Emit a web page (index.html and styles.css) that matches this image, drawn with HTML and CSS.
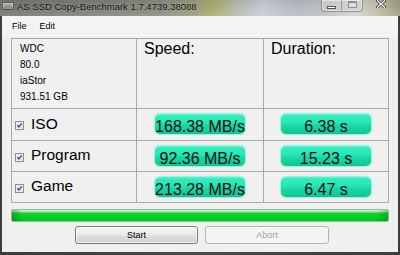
FILE: index.html
```html
<!DOCTYPE html>
<html>
<head>
<meta charset="utf-8">
<link rel="stylesheet" href="styles.css">
</head>
<body>
<div class="window">
  <div class="titlebar">
    <svg class="app-icon" width="12" height="8" viewBox="0 0 12 8">
      <defs>
        <linearGradient id="ig" x1="0" y1="0" x2="0" y2="1">
          <stop offset="0" stop-color="#e0e0e0"/>
          <stop offset="1" stop-color="#8a8a8a"/>
        </linearGradient>
      </defs>
      <rect x="0.5" y="0.5" width="11" height="7" fill="url(#ig)" stroke="#5a5a5a"/>
      <path d="M3 1.5v5M5 1.5v5M7 1.5v5M9 1.5v5" stroke="#6e6e6e" stroke-width="0.8"/>
    </svg>
    <span class="title">AS SSD Copy-Benchmark 1.7.4739.38088</span>
    <div class="caption">
      <div class="cap-group">
        <span class="cap-btn"><i class="glyph-min"></i></span>
        <span class="cap-btn last"><i class="glyph-max"></i></span>
      </div>
      <span class="close">
        <svg width="10" height="8" viewBox="0 0 10 8">
          <path d="M1.5 0.8L8.5 7.2M8.5 0.8L1.5 7.2" stroke="#2a2a2a" stroke-width="2.6" stroke-linecap="square"/>
          <path d="M1.5 0.8L8.5 7.2M8.5 0.8L1.5 7.2" stroke="#ffffff" stroke-width="1.3" stroke-linecap="square"/>
        </svg>
      </span>
    </div>
  </div>
  <div class="middle">
    <div class="client">
      <div class="menubar">
        <span class="menu-item">File</span>
        <span class="menu-item">Edit</span>
      </div>
      <div class="content">
        <div class="grid">
          <div class="cell info">
            <div>WDC</div>
            <div>80.0</div>
            <div>iaStor</div>
            <div>931.51 GB</div>
          </div>
          <div class="cell head">Speed:</div>
          <div class="cell head">Duration:</div>

          <div class="cell label">
            <svg class="check" width="9" height="9" viewBox="0 0 9 9"><rect x="0.5" y="0.5" width="8" height="8" fill="#f4f4f4" stroke="#8e8f8f"/><rect x="1.5" y="1.5" width="6" height="6" fill="#e2e4e8"/><path d="M2.3 4.3L3.8 6L6.8 2.4" fill="none" stroke="#3b4f80" stroke-width="1.3"/></svg>
            <span class="label-text">ISO</span>
          </div>
          <div class="cell val"><div class="pill">168.38 MB/s</div></div>
          <div class="cell val"><div class="pill">6.38 s</div></div>

          <div class="cell label">
            <svg class="check" width="9" height="9" viewBox="0 0 9 9"><rect x="0.5" y="0.5" width="8" height="8" fill="#f4f4f4" stroke="#8e8f8f"/><rect x="1.5" y="1.5" width="6" height="6" fill="#e2e4e8"/><path d="M2.3 4.3L3.8 6L6.8 2.4" fill="none" stroke="#3b4f80" stroke-width="1.3"/></svg>
            <span class="label-text">Program</span>
          </div>
          <div class="cell val"><div class="pill">92.36 MB/s</div></div>
          <div class="cell val"><div class="pill">15.23 s</div></div>

          <div class="cell label">
            <svg class="check" width="9" height="9" viewBox="0 0 9 9"><rect x="0.5" y="0.5" width="8" height="8" fill="#f4f4f4" stroke="#8e8f8f"/><rect x="1.5" y="1.5" width="6" height="6" fill="#e2e4e8"/><path d="M2.3 4.3L3.8 6L6.8 2.4" fill="none" stroke="#3b4f80" stroke-width="1.3"/></svg>
            <span class="label-text">Game</span>
          </div>
          <div class="cell val"><div class="pill">213.28 MB/s</div></div>
          <div class="cell val"><div class="pill">6.47 s</div></div>
        </div>
        <div class="progress"></div>
        <div class="buttons">
          <button class="btn">Start</button>
          <button class="btn disabled">Abort</button>
        </div>
      </div>
    </div>
  </div>
  <div class="bottom-frame"></div>
</div>
</body>
</html>
```

FILE: styles.css
```css
* { box-sizing: border-box; }
html, body { margin: 0; padding: 0; }
body {
  background: #3c3c3c;
  font-family: "Liberation Sans", Arial, sans-serif;
  color: #000;
}
.window {
  width: 400px;
  height: 255px;
  display: flex;
  flex-direction: column;
  overflow: hidden;
}
.titlebar {
  height: 16px;
  flex: none;
  display: flex;
  align-items: flex-start;
  background:
    linear-gradient(180deg, rgba(0,0,0,0.06) 0px, rgba(255,255,255,0) 8px, rgba(255,255,255,0.12) 16px),
    linear-gradient(90deg, #76766e 0px, #7e7e76 90px, #8a8a80 160px, #9a9c78 195px, #aaae72 215px, #b6bab0 238px, #c6cad2 262px, #b4b8c0 300px, #c2c2c4 330px, #d2d2d2 355px, #c0bea8 378px, #9e9c82 400px);
}
.app-icon {
  margin: 2px 0 0 2px;
  flex: none;
}
.title {
  margin-left: 3px;
  font-size: 9.5px;
  line-height: 14px;
  color: #151515;
  text-shadow: 0 0 3px rgba(255,255,255,0.35);
  white-space: nowrap;
}
.caption {
  margin-left: auto;
  display: flex;
  align-items: flex-start;
  margin-right: 2px;
}
.cap-group {
  display: flex;
  height: 12px;
  border: 1px solid rgba(90,90,90,0.55);
  border-top: none;
  border-radius: 0 0 4px 4px;
  box-shadow: inset 0 0 0 1px rgba(255,255,255,0.45);
  background: linear-gradient(180deg, rgba(255,255,255,0.25), rgba(200,205,215,0.35));
}
.cap-btn {
  width: 20px;
  height: 11px;
  display: flex;
  justify-content: center;
  border-right: 1px solid rgba(90,90,90,0.45);
}
.cap-btn.last { border-right: none; }
.glyph-min {
  display: block;
  width: 9px;
  height: 3px;
  margin-top: 6px;
  border: 1px solid #555;
  background: #fff;
}
.glyph-max {
  display: block;
  width: 9px;
  height: 7px;
  margin-top: 1px;
  border: 1px solid rgba(110,110,110,0.7);
  border-top-width: 2px;
  background: rgba(255,255,255,0.25);
}
.close {
  width: 35px;
  height: 11px;
  display: flex;
  justify-content: center;
}
.middle {
  flex: none;
  height: 236px;
  display: flex;
  background: linear-gradient(90deg, #3e3e3e 0, #3e3e3e 2px, transparent 2px);
}
.client {
  margin-left: 2px;
  width: 396px;
  height: 236px;
  background: #f0f0f0;
  display: flex;
  flex-direction: column;
}
.bottom-frame {
  flex: 1;
  background: linear-gradient(90deg, #3a3a3a, #4a4a48 200px, #3c3c3c);
}
.menubar {
  height: 20px;
  flex: none;
  display: flex;
  gap: 13px;
  padding: 1px 0 0 10px;
  font-size: 9px;
  line-height: 18px;
  background: linear-gradient(180deg, #f6f6f6, #f2f2f2);
  border-bottom: 1px solid #fafafa;
}
.menu-item { color: #000; }
.content {
  padding: 2px 0 0 9px;
  display: flex;
  flex-direction: column;
}
.grid {
  width: 378px;
  display: grid;
  grid-template-columns: 124px 126px 124px;
  grid-template-rows: 69px 31px 30px 30px;
  gap: 1px;
  background: #aaaaaa;
  border: 1px solid #aaaaaa;
}
.cell { background: #f0f0f0; }
.info {
  padding: 2px 0 0 8px;
  font-size: 10px;
  line-height: 16px;
  color: #000;
}
.head {
  padding: 1px 7px 0 7px;
  font-size: 16px;
  line-height: 18px;
}
.label {
  display: flex;
  align-items: center;
  padding: 0 0 2px 3px;
}
.check {
  flex: none;
  margin-top: 4px;
}
.label-text {
  margin-left: 7px;
  font-size: 15.5px;
  line-height: 18px;
}
.val {
  display: flex;
  justify-content: center;
  align-items: center;
  padding-bottom: 1px;
}
.pill {
  width: 90px;
  height: 20px;
  padding-top: 3px;
  font-size: 16px;
  line-height: 20px;
  text-align: center;
  white-space: nowrap;
  color: #0c0c0c;
  border-radius: 5px;
  background: linear-gradient(180deg, #5ef6d0 0px, #30ecbe 2px, #26e6b6 9px, #1cd8a6 11px, #14cc9c 17px, #10c292 20px);
  box-shadow: 0 0 0 1px rgba(120,240,205,0.55), 0 0 2px 1px rgba(150,245,215,0.35);
  display: flex;
  justify-content: center;
}
.progress {
  margin-top: 6px;
  width: 378px;
  height: 13px;
  border: 1px solid #9ab89a;
  border-radius: 2px;
  background:
    linear-gradient(90deg, rgba(0,80,0,0.35) 0px, rgba(0,80,0,0) 10px, rgba(0,80,0,0) 366px, rgba(0,80,0,0.35) 378px),
    linear-gradient(180deg, #d6f4d6 0px, #8ee69a 2px, #18d23a 3px, #00ce22 6px, #00c81e 11px);
}
.buttons {
  margin-top: 4px;
  display: flex;
  gap: 7px;
  padding-left: 64px;
}
.btn {
  width: 123px;
  height: 18px;
  padding: 0;
  font-family: "Liberation Sans", Arial, sans-serif;
  font-size: 9px;
  line-height: 16px;
  color: #000;
  border: 1px solid #7a7a7a;
  border-radius: 3px;
  background: linear-gradient(180deg, #f4f4f4 0%, #ececec 45%, #dedede 55%, #d2d2d2 100%);
  box-shadow: inset 0 0 0 1px rgba(255,255,255,0.7);
}
.btn.disabled {
  width: 124px;
  color: #a3a3a3;
  border-color: #b4b4b4;
  background: #f4f4f4;
  box-shadow: none;
}
```
